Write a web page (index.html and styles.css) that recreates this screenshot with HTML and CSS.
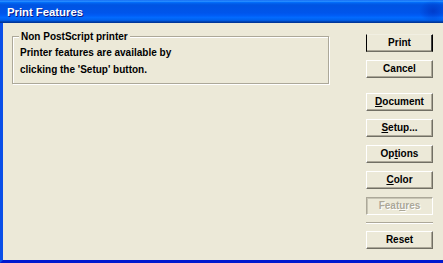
FILE: index.html
```html
<!DOCTYPE html>
<html>
<head>
<meta charset="utf-8">
<link rel="stylesheet" href="styles.css">
</head>
<body>
<div class="window">
  <div class="titlebar"><span class="title">Print Features</span></div>
  <div class="frame">
    <div class="content">
      <div class="group">
        <span class="legend">Non PostScript printer</span>
        <p class="msg">Printer features are available by<br>clicking the 'Setup' button.</p>
      </div>
      <div class="buttons">
        <button class="btn default">Print</button>
        <button class="btn gap8">Cancel</button>
        <button class="btn gap15"><u>D</u>ocument</button>
        <button class="btn gap8"><u>S</u>etup...</button>
        <button class="btn gap8">Op<u>t</u>ions</button>
        <button class="btn gap8"><u>C</u>olor</button>
        <button class="btn gap8 disabled">Feat<u>u</u>res</button>
        <div class="sep"></div>
        <button class="btn">Reset</button>
      </div>
    </div>
  </div>
</div>
</body>
</html>
```

FILE: styles.css
```css
html, body {
  margin: 0;
  padding: 0;
  width: 443px;
  height: 263px;
  overflow: hidden;
  background: #ece9d8;
}

.window {
  width: 443px;
  height: 263px;
  display: flex;
  flex-direction: column;
  font-family: "Liberation Sans", Arial, sans-serif;
}

.titlebar {
  height: 23px;
  flex: none;
  display: flex;
  align-items: center;
  padding: 1px 0 0 7px;
  box-sizing: border-box;
  background:
    radial-gradient(ellipse 14px 11px at 433px 11px, rgba(0, 40, 180, 0.55), rgba(0, 40, 180, 0) 100%),
    linear-gradient(to bottom, #0058ee 0%, #3593ff 4%, #288eff 6%, #127dff 8%, #036ffc 10%, #0262ee 14%, #0057e5 20%, #0054e3 24%, #0055eb 56%, #005bf5 66%, #026afe 76%, #0062ef 86%, #0052d6 92%, #0040ab 94%, #003092 100%);
}

.title {
  color: #fff;
  font-weight: bold;
  font-size: 11.3px;
  text-shadow: 1px 1px #0a1883;
}

.frame {
  flex: 1;
  display: flex;
  border-left: 3px solid #0a4fe8;
  border-bottom: 3px solid #0019cf;
  box-shadow: inset 1px -1px 0 #166aee;
  min-height: 0;
}

.content {
  flex: 1;
  display: flex;
  justify-content: space-between;
  align-items: flex-start;
  padding: 11px 10px 0 9px;
  background: #ece9d8;
  box-shadow: inset 0 -1px 0 #ece9d8;
}

.group {
  margin-top: 2px;
  width: 317px;
  height: 48px;
  box-sizing: border-box;
  border: 1px solid #aca899;
  box-shadow: inset 1px 1px 0 #fff, 1px 1px 0 #fff;
  font-size: 10px;
  font-weight: bold;
  color: #000;
}

.legend {
  display: block;
  width: fit-content;
  margin: -6px 0 0 6px;
  padding: 0 2px;
  line-height: 12px;
  background: #ece9d8;
}

.msg {
  margin: 1px 0 0 7px;
  line-height: 17px;
}

.buttons {
  width: 67px;
  display: flex;
  flex-direction: column;
}

.btn {
  width: 67px;
  height: 18px;
  padding: 0;
  margin: 0;
  box-sizing: border-box;
  background: #ece9d8;
  border: 1px solid;
  border-color: #fff #716f64 #716f64 #fff;
  box-shadow: inset -1px -1px 0 #aca899;
  font-family: "Liberation Sans", Arial, sans-serif;
  font-size: 10px;
  font-weight: bold;
  color: #000;
  line-height: 14px;
  text-align: center;
}

.btn u {
  text-decoration: underline;
  text-underline-offset: 1px;
}

.default {
  border-color: #f1efe2 #000 #716f64 #000;
  box-shadow: inset -1px 0 0 #404040, inset 0 -1px 0 #aca899;
}

.gap8 { margin-top: 8px; }
.gap15 { margin-top: 15px; }

.disabled {
  border-color: #aca899 #fff #fff #aca899;
  box-shadow: inset 1px 1px 0 #c8c5b5;
  color: #aca899;
  text-shadow: 1px 1px 0 #fff;
}

.sep {
  height: 1px;
  margin: 7px 0 7px;
  border-top: 1px solid #aca899;
  border-bottom: 1px solid #fff;
  height: 0;
}
```
